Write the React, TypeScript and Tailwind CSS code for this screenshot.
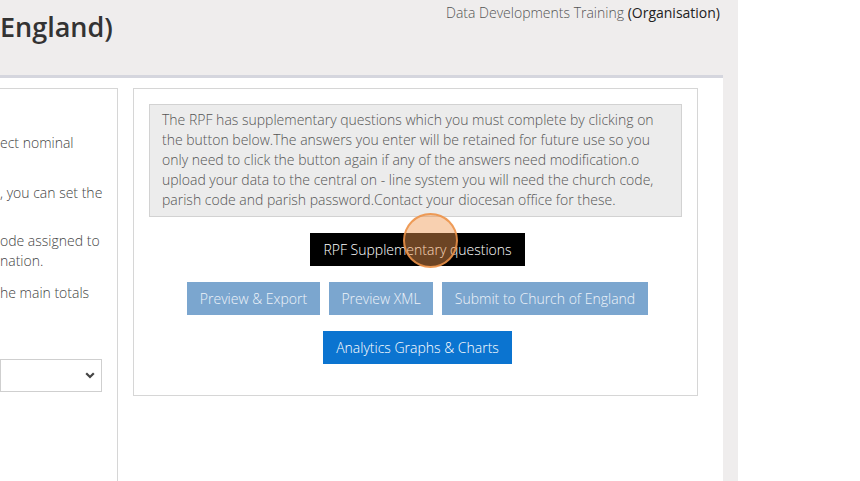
import React from 'react';

const leftLines: { text: string; top: number }[] = [
  { text: 'ect nominal', top: 133 },
  { text: ', you can set the', top: 183 },
  { text: 'ode assigned to', top: 231 },
  { text: 'nation.', top: 251 },
  { text: 'he main totals', top: 283 },
];

const GreyButton: React.FC<{ label: string; width: string }> = ({ label, width }) => (
  <button className={`${width} h-[33px] bg-[#7ba6cf] text-[#eef3f9] text-[14px] font-light flex items-center justify-center`}>
    {label}
  </button>
);

const LeftPanel: React.FC = () => (
  <div className="w-[118px] shrink-0 self-stretch border-t border-r border-[#d6d6d6] flex flex-col text-[14px] leading-[20px] font-light text-[#444]">
    {/* lines whose start runs off to the left */}
    <div className="pt-[44px] whitespace-nowrap">
      <div className="h-[20px]">{leftLines[0].text}</div>
      <div className="h-[20px]" />
      <div className="h-[20px] mt-[10px]">{leftLines[1].text}</div>
      <div className="h-[20px]" />
      <div className="h-[20px] mt-[8px]">{leftLines[2].text}</div>
      <div className="h-[20px]">{leftLines[3].text}</div>
      <div className="h-[20px] mt-[12px]">{leftLines[4].text}</div>
    </div>
    <div className="mt-[56px] mr-[15px] h-[33px] border border-[#cfcfcf] flex items-center justify-end pr-[6px]">
      <svg width="10" height="7" viewBox="0 0 10 7">
        <path d="M1.2 1.2 L5 5 L8.8 1.2" fill="none" stroke="#444" strokeWidth="2.2" />
      </svg>
    </div>
  </div>
);

const RightPanel: React.FC = () => (
  <div className="relative self-start ml-[15px] w-[565px] h-[308px] border border-[#d6d6d6] p-[15px] flex flex-col items-center">
    <div className="w-full bg-[#ececec] border border-[#d2d2d2] pl-[12px] pr-[8px] pt-[5px] pb-[6px] text-[14px] leading-[20px] font-light text-[#555]">
      The RPF has supplementary questions which you must complete by clicking on the button below.The answers you enter will be retained for future use so you only need to click the button again if any of the answers need modification.o upload your data to the central on - line system you will need the church code, parish code and parish password.Contact your diocesan office for these.
    </div>
    <button className="mt-[16px] ml-[4px] h-[33px] w-[215px] bg-black text-white text-[14px] font-light flex items-center justify-center">
      RPF Supplementary questions
    </button>
    <div className="mt-[16px] ml-[4px] flex gap-[9px]">
      <GreyButton label="Preview & Export" width="w-[133px]" />
      <GreyButton label="Preview XML" width="w-[104px]" />
      <GreyButton label="Submit to Church of England" width="w-[206px]" />
    </div>
    <button className="mt-[16px] ml-[4px] h-[33px] w-[189px] bg-[#0b74d0] text-white text-[14px] font-light flex items-center justify-center">
      Analytics Graphs &amp; Charts
    </button>
    {/* click marker */}
    <div className="absolute left-[269px] top-[124px] w-[55px] h-[55px] rounded-full bg-[rgba(240,150,80,0.45)] border-2 border-[rgba(236,146,72,0.85)]" />
  </div>
);

export default function App() {
  return (
    <div className="w-[860px] h-[481px] flex bg-white overflow-hidden" style={{ fontFamily: '"Open Sans", "Noto Sans", sans-serif' }}>
      <div className="w-[738px] h-full bg-[#efeded] flex flex-col">
        <div className="h-[75px] shrink-0 flex justify-between items-start pr-[18px]">
          <h1 className="pt-[10px] text-[27px] leading-[34px] font-semibold text-[#333]">England)</h1>
          <div className="pt-[3px] text-[14px] leading-[20px] font-light text-[#555]">
            Data Developments Training <span className="font-normal text-[#222]">(Organisation)</span>
          </div>
        </div>
        <div className="w-[723px] h-[3px] bg-[#d5d6de] shrink-0" />
        <div className="w-[723px] flex-1 bg-white flex items-stretch pt-[10px]">
          <LeftPanel />
          <RightPanel />
        </div>
      </div>
    </div>
  );
}
